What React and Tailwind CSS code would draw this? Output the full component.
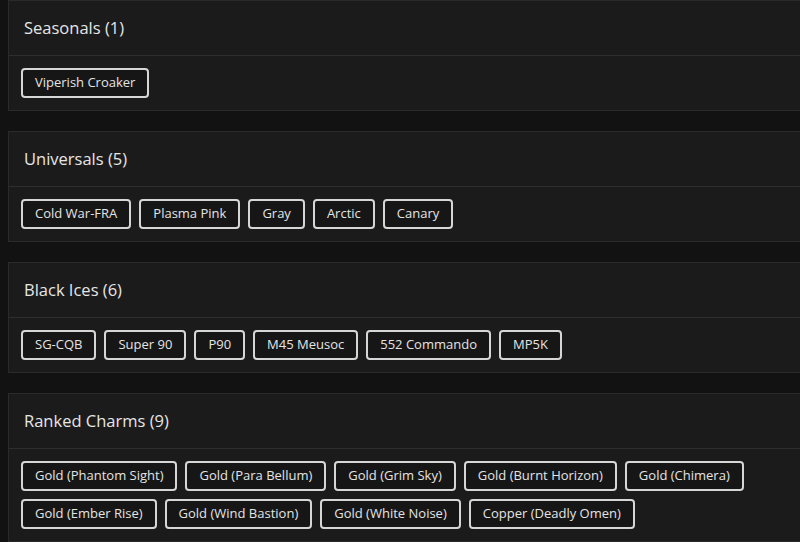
const sections = [
  { title: 'Seasonals', items: ['Viperish Croaker'] },
  { title: 'Universals', items: ['Cold War-FRA', 'Plasma Pink', 'Gray', 'Arctic', 'Canary'] },
  { title: 'Black Ices', items: ['SG-CQB', 'Super 90', 'P90', 'M45 Meusoc', '552 Commando', 'MP5K'] },
  {
    title: 'Ranked Charms',
    items: [
      'Gold (Phantom Sight)',
      'Gold (Para Bellum)',
      'Gold (Grim Sky)',
      'Gold (Burnt Horizon)',
      'Gold (Chimera)',
      'Gold (Ember Rise)',
      'Gold (Wind Bastion)',
      'Gold (White Noise)',
      'Copper (Deadly Omen)',
    ],
  },
];

function Section({ title, items }) {
  return (
    <div className="mb-5 mr-[-12px] border border-[#2a2a2a] bg-[#1b1b1b]">
      <div className="flex h-[55px] items-center border-b border-[#2e2e2e] px-[15px]">
        <h2 className="text-[16.5px] font-medium text-[#e6e6e6]">
          {title} ({items.length})
        </h2>
      </div>
      <div className="flex flex-wrap gap-x-2 gap-y-2 p-3">
        {items.map((item) => (
          <button
            key={item}
            className="h-[30px] rounded-[4px] border-2 border-[#d6d6d6] bg-[#161616] px-3 text-[13px] text-[#e4e4e4]"
          >
            {item}
          </button>
        ))}
      </div>
    </div>
  );
}

export default function App() {
  return (
    <div
      className="h-[542px] overflow-hidden bg-[#121212] pl-2"
      style={{ fontFamily: '"Open Sans", "Noto Sans", sans-serif' }}
    >
      {sections.map((s) => (
        <Section key={s.title} {...s} />
      ))}
    </div>
  );
}
